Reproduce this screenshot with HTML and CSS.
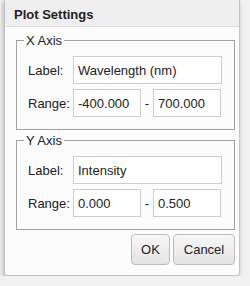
FILE: index.html
```html
<!DOCTYPE html>
<html lang="en">
<head>
    <meta charset="UTF-8">
    <title>Plot Settings</title>
    <link rel="stylesheet" href="styles.css">
</head>
<body>
<div class="dialog">
    <div class="title">Plot Settings</div>
    <div class="content">
        <fieldset class="axis">
            <legend>X Axis</legend>
            <div class="row">
                <span class="lbl">Label:</span>
                <input class="wide" type="text" value="Wavelength (nm)">
            </div>
            <div class="row">
                <span class="lbl">Range:</span>
                <input class="half" type="text" value="-400.000">
                <span class="dash">-</span>
                <input class="half" type="text" value="700.000">
            </div>
        </fieldset>
        <fieldset class="axis">
            <legend>Y Axis</legend>
            <div class="row">
                <span class="lbl">Label:</span>
                <input class="wide" type="text" value="Intensity">
            </div>
            <div class="row">
                <span class="lbl">Range:</span>
                <input class="half" type="text" value="0.000">
                <span class="dash">-</span>
                <input class="half" type="text" value="0.500">
            </div>
        </fieldset>
        <div class="buttons">
            <button class="btn ok">OK</button>
            <button class="btn cancel">Cancel</button>
        </div>
    </div>
</div>
</body>
</html>
```

FILE: styles.css
```css
* {
    margin: 0;
    padding: 0;
    box-sizing: border-box;
}

body {
    background-color: #f1f1f1;
    font-family: "Liberation Sans", Arial, sans-serif;
    font-size: 13px;
    color: #222;
}

.dialog {
    width: 236px;
    height: 276px;
    margin-left: 4px;
    background-color: #fcfcfc;
    border: 1px solid #c4c4c4;
    border-top: none;
    border-radius: 0 0 3px 3px;
    box-shadow: -1px 1px 4px rgba(0, 0, 0, 0.25);
    display: flex;
    flex-direction: column;
}

.title {
    height: 27px;
    padding: 7px 0 0 9px;
    line-height: 16px;
    font-weight: bold;
    background-color: #efefef;
    border-bottom: 1px solid #dcdcdc;
}

.content {
    padding: 6px 4px 0 11px;
}

.axis {
    width: 219px;
    border: 1px solid #a0a0a0;
    box-shadow: inset 1px 1px 0 #fff, 1px 1px 0 #fff;
    padding: 0 11px 12px 11px;
    margin-bottom: 3px;
}

.axis legend {
    padding: 0 2px;
    margin-left: -4px;
    line-height: 15px;
}

.row {
    display: flex;
    align-items: center;
    margin-top: 5px;
}

.row:first-of-type {
    margin-top: 8px;
}

.lbl {
    width: 45px;
    flex: none;
}

.row input {
    height: 28px;
    border: 1px solid #cdcdcd;
    background-color: #fff;
    padding: 0 4px;
    font-family: "Liberation Sans", Arial, sans-serif;
    font-size: 13px;
    color: #222;
    outline: none;
}

.wide {
    width: 149px;
}

.half {
    width: 68px;
}

.dash {
    width: 12px;
    text-align: center;
}

.buttons {
    display: flex;
    justify-content: flex-end;
    gap: 3px;
    margin-top: 4px;
}

.btn {
    height: 31px;
    border: 1px solid #bdbdbd;
    border-radius: 4px;
    background: linear-gradient(#f7f7f7, #e4e4e4);
    font-family: "Liberation Sans", Arial, sans-serif;
    font-size: 13px;
    color: #222;
}

.ok {
    width: 39px;
}

.cancel {
    width: 62px;
}
```
